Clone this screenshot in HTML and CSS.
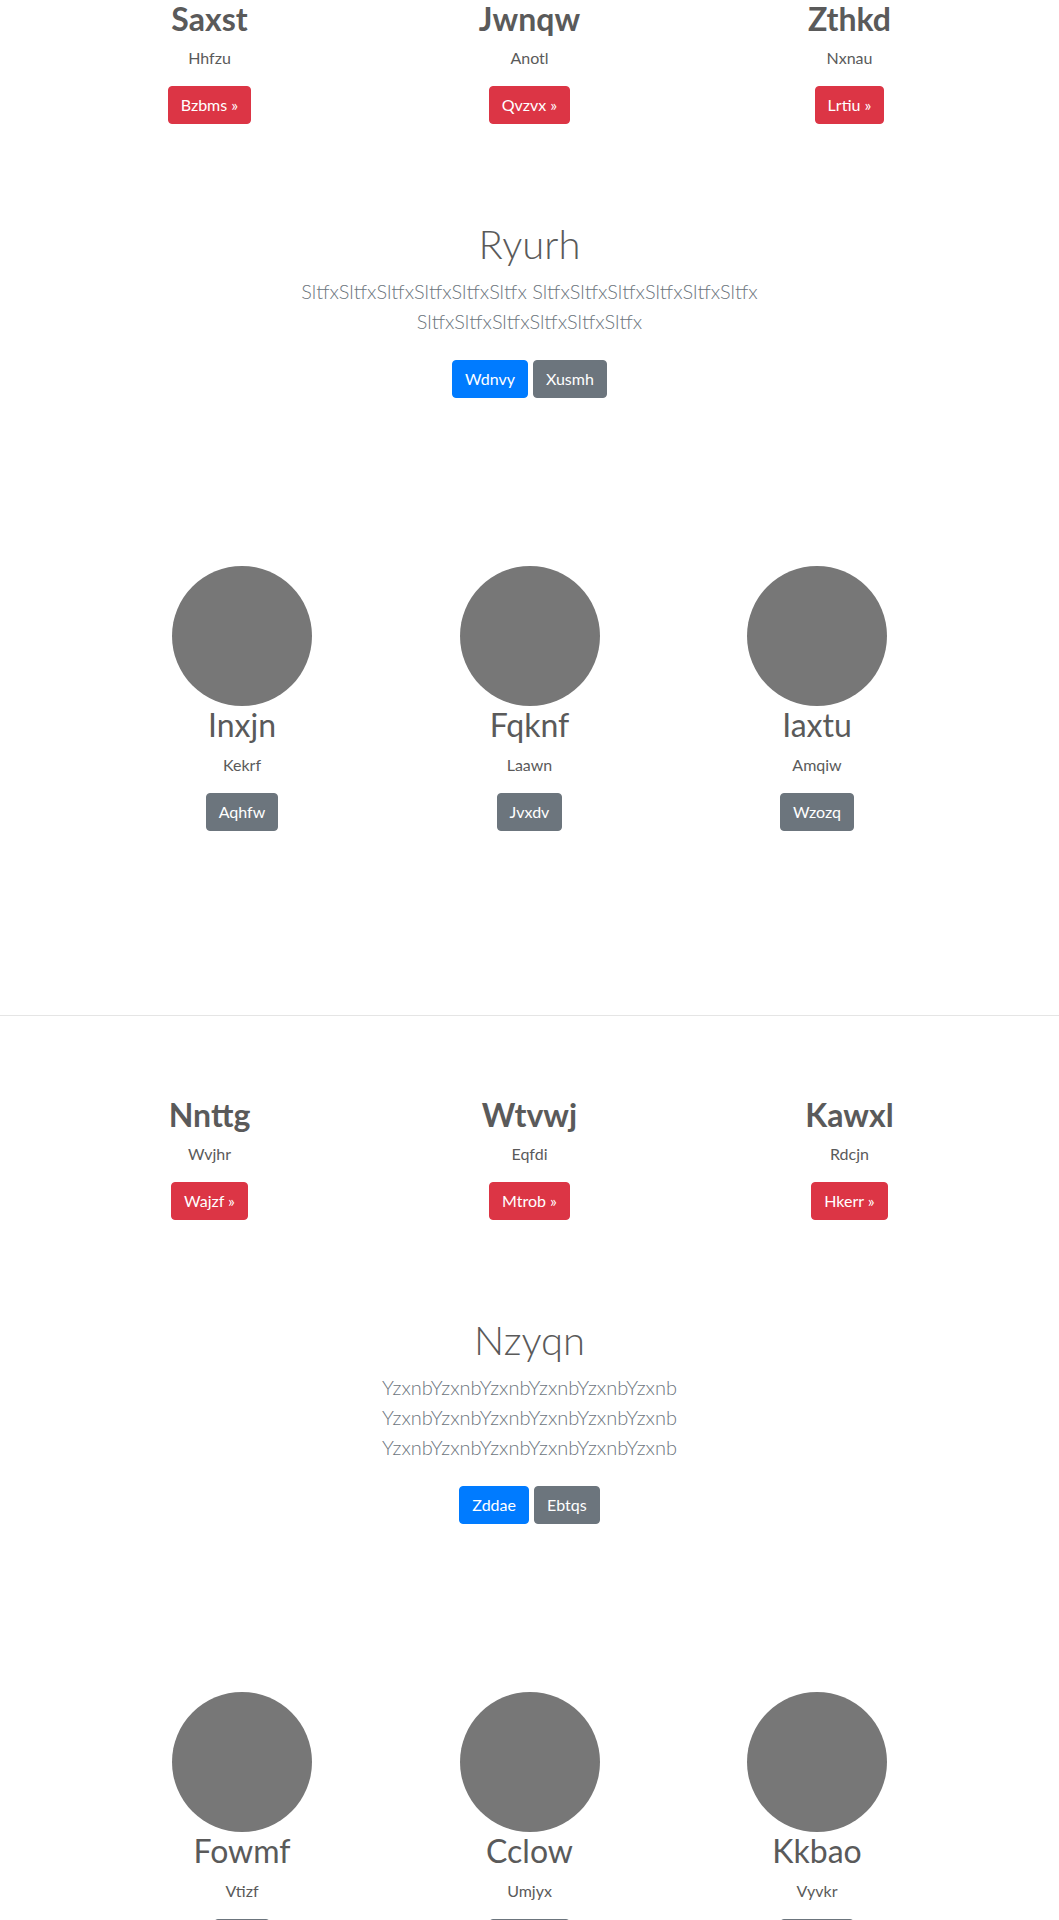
FILE: index.html
```html
<!DOCTYPE html>
<html lang="en">
<head>
<meta charset="utf-8">
<title>Sections</title>
<link rel="stylesheet" href="styles.css">
</head>
<body>
<main class="page">
  <section class="features">
    <div class="feature">
      <h2 class="feature-title">Saxst</h2>
      <p class="feature-text">Hhfzu</p>
      <p class="action"><a class="btn btn-danger" href="#">Bzbms &raquo;</a></p>
    </div>
    <div class="feature">
      <h2 class="feature-title">Jwnqw</h2>
      <p class="feature-text">Anotl</p>
      <p class="action"><a class="btn btn-danger" href="#">Qvzvx &raquo;</a></p>
    </div>
    <div class="feature">
      <h2 class="feature-title">Zthkd</h2>
      <p class="feature-text">Nxnau</p>
      <p class="action"><a class="btn btn-danger" href="#">Lrtiu &raquo;</a></p>
    </div>
  </section>

  <section class="hero">
    <div class="hero-inner">
      <h1 class="hero-title">Ryurh</h1>
      <p class="hero-lead">SltfxSltfxSltfxSltfxSltfxSltfx SltfxSltfxSltfxSltfxSltfxSltfx SltfxSltfxSltfxSltfxSltfxSltfx</p>
      <p class="hero-actions"><a class="btn btn-primary" href="#">Wdnvy</a><a class="btn btn-secondary" href="#">Xusmh</a></p>
    </div>
  </section>

  <section class="people">
    <div class="person">
      <div class="avatar"></div>
      <h2 class="person-name">Inxjn</h2>
      <p class="person-text">Kekrf</p>
      <p class="action"><a class="btn btn-secondary" href="#">Aqhfw</a></p>
    </div>
    <div class="person">
      <div class="avatar"></div>
      <h2 class="person-name">Fqknf</h2>
      <p class="person-text">Laawn</p>
      <p class="action"><a class="btn btn-secondary" href="#">Jvxdv</a></p>
    </div>
    <div class="person">
      <div class="avatar"></div>
      <h2 class="person-name">Iaxtu</h2>
      <p class="person-text">Amqiw</p>
      <p class="action"><a class="btn btn-secondary" href="#">Wzozq</a></p>
    </div>
  </section>

  <hr class="divider">

  <section class="features">
    <div class="feature">
      <h2 class="feature-title">Nnttg</h2>
      <p class="feature-text">Wvjhr</p>
      <p class="action"><a class="btn btn-danger" href="#">Wajzf &raquo;</a></p>
    </div>
    <div class="feature">
      <h2 class="feature-title">Wtvwj</h2>
      <p class="feature-text">Eqfdi</p>
      <p class="action"><a class="btn btn-danger" href="#">Mtrob &raquo;</a></p>
    </div>
    <div class="feature">
      <h2 class="feature-title">Kawxl</h2>
      <p class="feature-text">Rdcjn</p>
      <p class="action"><a class="btn btn-danger" href="#">Hkerr &raquo;</a></p>
    </div>
  </section>

  <section class="hero">
    <div class="hero-inner">
      <h1 class="hero-title">Nzyqn</h1>
      <p class="hero-lead">YzxnbYzxnbYzxnbYzxnbYzxnbYzxnb YzxnbYzxnbYzxnbYzxnbYzxnbYzxnb YzxnbYzxnbYzxnbYzxnbYzxnbYzxnb</p>
      <p class="hero-actions"><a class="btn btn-primary" href="#">Zddae</a><a class="btn btn-secondary" href="#">Ebtqs</a></p>
    </div>
  </section>

  <section class="people">
    <div class="person">
      <div class="avatar"></div>
      <h2 class="person-name">Fowmf</h2>
      <p class="person-text">Vtizf</p>
      <p class="action"><a class="btn btn-secondary" href="#">Jrtix</a></p>
    </div>
    <div class="person">
      <div class="avatar"></div>
      <h2 class="person-name">Cclow</h2>
      <p class="person-text">Umjyx</p>
      <p class="action"><a class="btn btn-secondary" href="#">Hmwqd</a></p>
    </div>
    <div class="person">
      <div class="avatar"></div>
      <h2 class="person-name">Kkbao</h2>
      <p class="person-text">Vyvkr</p>
      <p class="action"><a class="btn btn-secondary" href="#">Ovbqn</a></p>
    </div>
  </section>
</main>
</body>
</html>
```

FILE: styles.css
```css
* {
  box-sizing: border-box;
}

html, body {
  margin: 0;
  padding: 0;
  background: #fff;
}

body {
  font-family: Lato, "Open Sans", "Noto Sans", sans-serif;
  font-size: 16px;
  line-height: 1.5;
  color: #5a5a5a;
}

.features {
  display: grid;
  grid-template-columns: repeat(3, 320px);
  width: 960px;
  margin: 0 auto;
  text-align: center;
}

.feature-title {
  font-size: 32px;
  font-weight: 700;
  line-height: 1.2;
  margin: 0 0 8px;
  color: #5a5a5a;
}

.feature-text,
.person-text {
  margin: 0 0 16px;
}

.action {
  display: flex;
  justify-content: center;
  margin: 0 0 16px;
}

.btn {
  display: inline-block;
  padding: 6px 12px;
  border: 1px solid transparent;
  border-radius: 4px;
  font-size: 16px;
  line-height: 24px;
  font-weight: 400;
  color: #fff;
  text-decoration: none;
  white-space: nowrap;
}

.btn-danger {
  background: #dc3545;
  border-color: #dc3545;
}

.btn-primary {
  background: #007bff;
  border-color: #007bff;
}

.btn-secondary {
  background: #6c757d;
  border-color: #6c757d;
}

.hero {
  padding: 80px 0;
  text-align: center;
}

.hero-inner {
  max-width: 560px;
  margin: 0 auto;
}

.hero-title {
  font-size: 40px;
  font-weight: 300;
  line-height: 1.2;
  margin: 0 0 8px;
  color: #5a5a5a;
}

.hero-lead {
  font-size: 20px;
  font-weight: 300;
  line-height: 1.5;
  color: #6c757d;
  margin: 0 0 16px;
}

.hero-actions {
  display: flex;
  justify-content: center;
  gap: 5px;
  margin: 0;
  padding: 8px 0;
}

.people {
  display: grid;
  grid-template-columns: repeat(3, 287.5px);
  width: 862.5px;
  margin: 0 auto;
  padding: 80px 0 88px;
  text-align: center;
}

.avatar {
  width: 140px;
  height: 140px;
  border-radius: 50%;
  background: #777;
  margin: 0 auto;
}

.person-name {
  font-size: 32px;
  font-weight: 400;
  line-height: 1.2;
  margin: 0 0 8px;
  color: #5a5a5a;
}

.divider {
  height: 0;
  border: 0;
  border-top: 1px solid rgba(0, 0, 0, 0.1);
  margin: 80px 0;
}
```
